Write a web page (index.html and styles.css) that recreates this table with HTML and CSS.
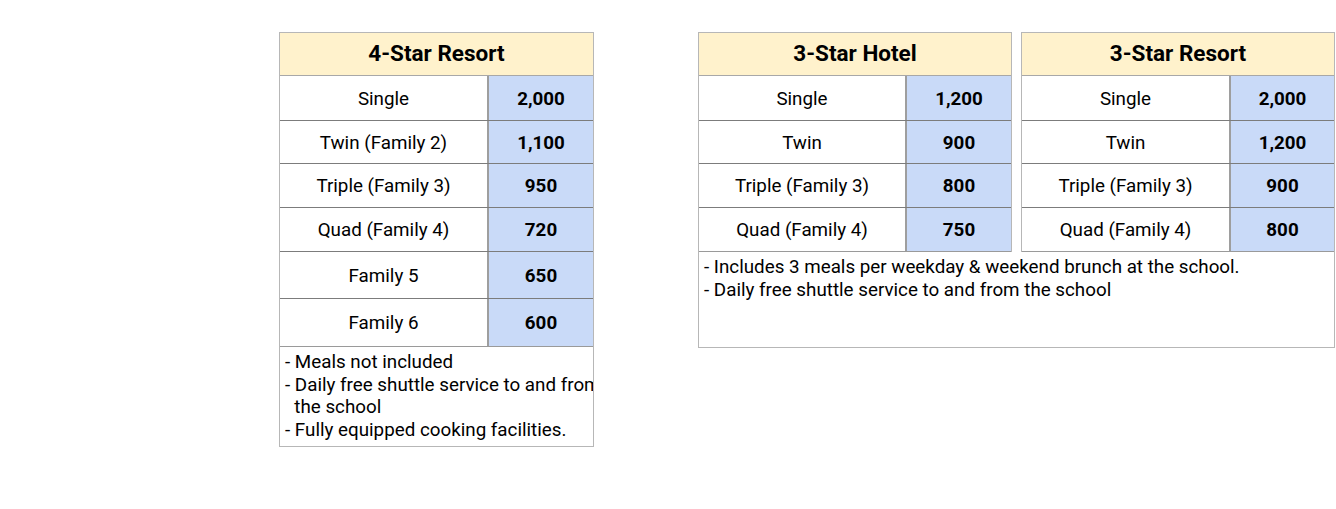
FILE: index.html
```
<!DOCTYPE html>
<html>
<head>
<meta charset="utf-8">
<link rel="stylesheet" href="styles.css">
</head>
<body>
<div class="page">
  <div class="tbl t1">
    <div class="head">4-Star Resort</div>
    <div class="row r45"><div class="lab">Single</div><div class="val">2,000</div></div>
    <div class="row r43"><div class="lab">Twin (Family 2)</div><div class="val">1,100</div></div>
    <div class="row r44"><div class="lab">Triple (Family 3)</div><div class="val">950</div></div>
    <div class="row r44"><div class="lab">Quad (Family 4)</div><div class="val">720</div></div>
    <div class="row r47"><div class="lab">Family 5</div><div class="val">650</div></div>
    <div class="row r48 last"><div class="lab">Family 6</div><div class="val">600</div></div>
    <div class="notes n1">
      <div class="ln">- Meals not included</div>
      <div class="ln">- Daily free shuttle service to and from</div>
      <div class="ln">  the school</div>
      <div class="ln">- Fully equipped cooking facilities.</div>
    </div>
  </div>

  <div class="group">
    <div class="pair">
      <div class="tbl t2">
        <div class="head">3-Star Hotel</div>
        <div class="row r45"><div class="lab">Single</div><div class="val">1,200</div></div>
        <div class="row r43"><div class="lab">Twin</div><div class="val">900</div></div>
        <div class="row r44"><div class="lab">Triple (Family 3)</div><div class="val">800</div></div>
        <div class="row r44 last"><div class="lab">Quad (Family 4)</div><div class="val">750</div></div>
      </div>
      <div class="tbl t3">
        <div class="head">3-Star Resort</div>
        <div class="row r45"><div class="lab">Single</div><div class="val">2,000</div></div>
        <div class="row r43"><div class="lab">Twin</div><div class="val">1,200</div></div>
        <div class="row r44"><div class="lab">Triple (Family 3)</div><div class="val">900</div></div>
        <div class="row r44 last"><div class="lab">Quad (Family 4)</div><div class="val">800</div></div>
      </div>
    </div>
    <div class="notes n2">
      <div class="ln">- Includes 3 meals per weekday &amp; weekend brunch at the school.</div>
      <div class="ln">- Daily free shuttle service to and from the school</div>
    </div>
  </div>
</div>
</body>
</html>
```
FILE: styles.css
```
* { box-sizing: border-box; }
html, body { margin: 0; padding: 0; background: #fff; }
body {
  font-family: Roboto, "Liberation Sans", Arial, sans-serif;
  color: #000;
  width: 1336px;
  height: 509px;
  overflow: hidden;
}
.page {
  display: flex;
  align-items: flex-start;
  padding: 32px 0 0 279px;
  gap: 104px;
}
.tbl {
  display: flex;
  flex-direction: column;
  border-left: 1px solid #b7b7b7;
  border-right: 1px solid #b7b7b7;
  border-top: 1px solid #b7b7b7;
}
.t1 { width: 315px; border-bottom: 1px solid #b7b7b7; }
.t2 { width: 314px; }
.t3 { width: 314px; }
.head {
  height: 43px;
  padding-bottom: 2px;
  background: #fff2cc;
  border-bottom: 1px solid #a8a8a8;
  display: flex;
  align-items: center;
  justify-content: center;
  font-weight: 700;
  font-size: 22.5px;
}
.row {
  display: flex;
  border-bottom: 1px solid #7c7c7c;
  font-size: 18.8px;
}
.row.last { border-bottom: 1px solid #9a9a9a; }
.r43 { height: 43px; }
.r44 { height: 44px; }
.r45 { height: 45px; }
.r47 { height: 47px; }
.r48 { height: 48px; }
.lab {
  flex: 0 0 209px;
  display: flex;
  align-items: center;
  justify-content: center;
  padding-top: 1px;
  border-right: 2px solid #9e9e9e;
}
.t2 .lab { flex-basis: 208px; }
.val {
  flex: 1;
  display: flex;
  align-items: center;
  justify-content: center;
  padding-top: 1px;
  background: #c9daf8;
  font-weight: 700;
}
.notes {
  font-size: 18.8px;
  line-height: 22.7px;
  padding: 4px 0 0 5px;
  overflow: hidden;
}
.notes .ln { white-space: pre; }
.n1 { height: 99px; }
.group {
  display: flex;
  flex-direction: column;
  width: 637px;
}
.pair {
  display: flex;
  gap: 9px;
}
.n2 {
  height: 96px;
  border: 1px solid #b7b7b7;
  border-top: none;
}
```
